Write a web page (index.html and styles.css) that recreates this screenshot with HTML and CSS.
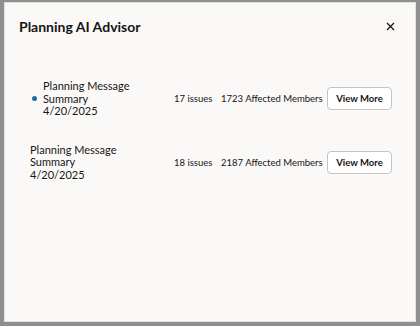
FILE: index.html
```html
<!DOCTYPE html>
<html lang="en">
<head>
  <meta charset="UTF-8">
  <meta name="viewport" content="width=device-width, initial-scale=1.0">
  <title>Planning AI Advisor</title>
  <link rel="stylesheet" href="styles.css">
</head>
<body>

<div class="dialog">
  <div class="dialog-header">
    <h2>Planning AI Advisor</h2>
    <button class="close-btn" aria-label="Close">
      <svg width="9" height="9" viewBox="0 0 9 9"><path d="M1 1L8 8M8 1L1 8" stroke="#161513" stroke-width="1.3"/></svg>
    </button>
  </div>

  <div class="message-list">
    <div class="message-row">
      <div class="message-name unread">
        <span class="dot"></span>
        <div class="name-text">
          <div>Planning Message</div>
          <div>Summary</div>
          <div>4/20/2025</div>
        </div>
      </div>
      <div class="issues">17 issues</div>
      <div class="members">1723 Affected Members</div>
      <button class="view-btn">View More</button>
    </div>

    <div class="message-row">
      <div class="message-name">
        <div class="name-text">
          <div>Planning Message</div>
          <div>Summary</div>
          <div>4/20/2025</div>
        </div>
      </div>
      <div class="issues">18 issues</div>
      <div class="members">2187 Affected Members</div>
      <button class="view-btn">View More</button>
    </div>
  </div>
</div>

</body>
</html>
```

FILE: styles.css
```css
body {
  margin: 0;
  height: 326px;
  background-color: #8f8f8f;
  font-family: 'Lato', 'Noto Sans', sans-serif;
  color: #161513;
  overflow: hidden;
}
.dialog {
  box-sizing: border-box;
  margin: 2px 4px 0 4px;
  width: 412px;
  height: 320px;
  background-color: #faf9f8;
  border: 1px solid #e4e2df;
}
.dialog-header {
  display: flex;
  justify-content: space-between;
  align-items: center;
  padding: 12px 16px 0 14px;
  height: 22px;
}
.dialog-header h2 {
  margin: 0;
  font-size: 14px;
  font-weight: 700;
}
.close-btn {
  background: none;
  border: none;
  padding: 4px;
  cursor: pointer;
  display: flex;
}
.message-list {
  padding: 43px 0 0 25px;
  display: flex;
  flex-direction: column;
  gap: 26px;
}
.message-row {
  display: flex;
  align-items: center;
  font-size: 9.5px;
}
.message-name {
  width: 144px;
  display: flex;
  align-items: center;
  font-size: 11px;
  line-height: 12.6px;
}
.message-name.unread {
  padding-left: 2px;
  width: 142px;
}
.dot {
  width: 5px;
  height: 5px;
  border-radius: 50%;
  background-color: #1f6f9a;
  margin-right: 6px;
}
.issues {
  width: 47px;
}
.members {
  width: 106px;
}
.view-btn {
  font-family: inherit;
  font-size: 9.5px;
  font-weight: 700;
  color: #161513;
  background-color: #fff;
  border: 1px solid #c7c4bf;
  border-radius: 4px;
  width: 65px;
  height: 23px;
  padding: 0;
  cursor: pointer;
}
```
